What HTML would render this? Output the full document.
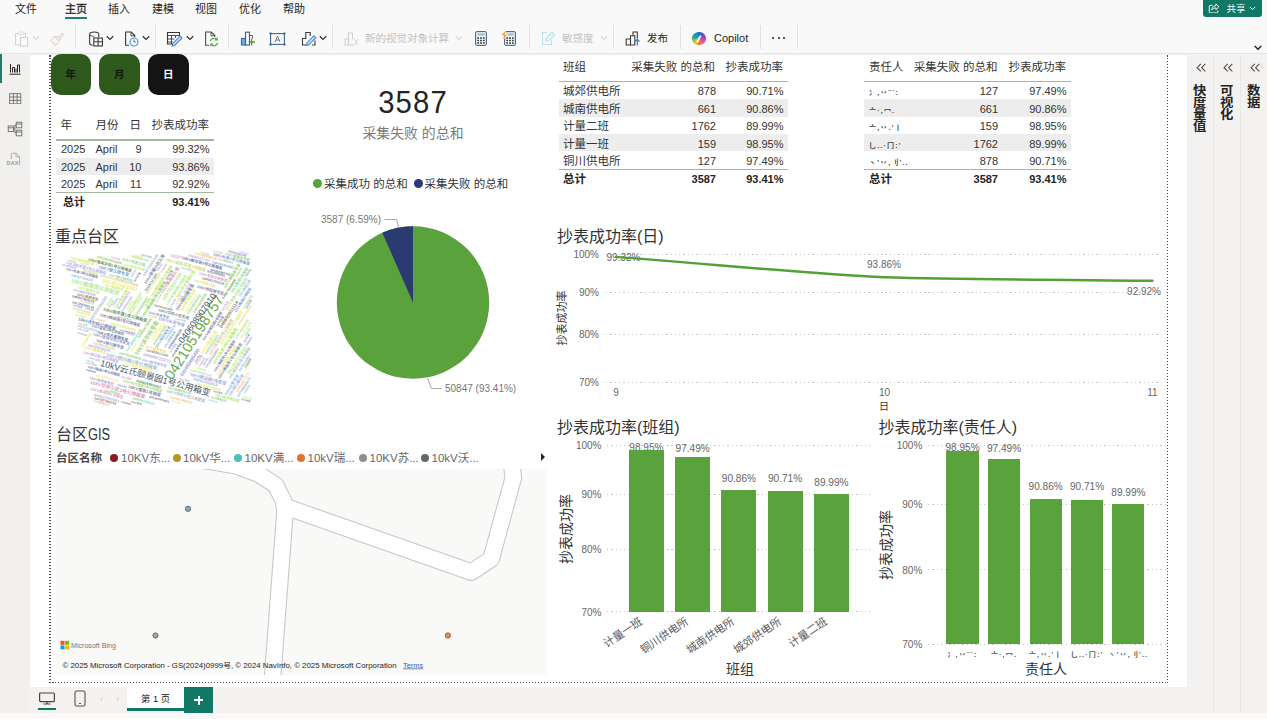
<!DOCTYPE html><html lang="zh-CN"><head><meta charset="utf-8"><title>Power BI</title><style>
*{box-sizing:border-box;margin:0;padding:0}
html,body{width:1267px;height:719px;overflow:hidden;background:#fff}
body{font-family:"Liberation Sans","Noto Sans CJK SC",sans-serif;color:#252423;position:relative}
.abs{position:absolute}
#top{left:0;top:0;width:1267px;height:54px;background:#f9f9f9;border-bottom:1px solid #e6e6e6;box-shadow:0 1px 2px rgba(0,0,0,.08)}
.menu{position:absolute;top:1px;height:16px;line-height:16px;font-size:11px;color:#252423;white-space:nowrap}
.sep{position:absolute;top:25px;width:1px;height:24px;background:#e1e1e1}
#leftnav{left:0;top:55px;width:30px;height:658px;background:#f1f0ef}
#rightp{left:1187px;top:55px;width:80px;height:658px;background:#f3f2f1}
#bottom{left:30px;top:687px;width:1157px;height:26px;background:#f3f2f1}
#foot{left:0;top:713px;width:1267px;height:6px;background:#faf9f8}
.t{position:absolute;white-space:nowrap}
.r{text-align:right}
.tbl{position:absolute;font-size:11px;color:#333}
.tbl .t{height:17.4px;line-height:17.4px}
.hl{position:absolute;height:1.4px;background:#a3b89a}
.alt{position:absolute;background:#ededed;height:17.4px}
.ttl{position:absolute;white-space:nowrap;font-size:16px;color:#333;line-height:20px}
.ax{position:absolute;white-space:nowrap;font-size:10px;color:#666;line-height:12px}
.dl{position:absolute;white-space:nowrap;font-size:10px;color:#666;line-height:12px;text-align:center}
.grid{position:absolute;height:1px;background:repeating-linear-gradient(to right,#c6c6c6 0 1.3px,transparent 1.3px 4.3px)}
.bar{position:absolute;background:#5aa23c}
.vt{position:absolute;writing-mode:vertical-rl;text-orientation:upright;font-weight:bold;font-size:12px;line-height:14px;color:#252423;letter-spacing:0}
</style></head><body>
<div id="top" class="abs">
<div class="menu" style="left:15px">文件</div>
<div class="menu" style="left:65px;-webkit-text-stroke:.3px #252423">主页</div>
<div class="menu" style="left:108px">插入</div>
<div class="menu" style="left:152px">建模</div>
<div class="menu" style="left:195px">视图</div>
<div class="menu" style="left:239px">优化</div>
<div class="menu" style="left:283px">帮助</div>
<div class="abs" style="left:65px;top:17px;width:22px;height:2px;background:#1d7e6c"></div>
<div class="abs" style="left:1203px;top:-3px;width:58.500px;height:20px;background:#117865;border-radius:3px"></div>
<svg class="abs" style="left:1208px;top:2.500px" width="12.500" height="10.700" viewBox="0.500 0 12.500 11.300" fill="none" stroke="#fff" stroke-width="1"><path d="M5 2.5H2.5a1 1 0 0 0-1 1v6a1 1 0 0 0 1 1h7a1 1 0 0 0 1-1V8"/><path d="M8.5 1l3.2 3-3.2 3V5.3c-2.2 0-3.5.8-4.3 2.2.2-2.6 1.6-4.4 4.3-4.6z"/></svg>
<div class="t" style="left:1226.500px;top:1px;font-size:9.500px;line-height:15px;color:#fff">共享</div>
<svg class="abs" style="left:1248.500px;top:5.500px" width="7" height="5" viewBox="0 0 8 6" fill="none" stroke="#fff" stroke-width="1.1"><path d="M.7 1l3.3 3.4L7.3 1"/></svg>
<svg class="abs" style="left:1254px;top:45px" width="8" height="6" viewBox="0 0 8 6" fill="none" stroke="#222" stroke-width="1.4"><path d="M.7 1l3.3 3.3L7.3 1"/></svg>
<div class="sep" style="left:75px"></div>
<div class="sep" style="left:155px"></div>
<div class="sep" style="left:228px"></div>
<div class="sep" style="left:332px"></div>
<div class="sep" style="left:529px"></div>
<div class="sep" style="left:613px"></div>
<div class="sep" style="left:680px"></div>
<div class="sep" style="left:760px"></div>
<div class="sep" style="left:797px"></div>
<svg class="abs" style="left:14px;top:31px" width="15" height="16" viewBox="0 0 15 16" fill="none" stroke="#d4d2d0" stroke-width="1"><path d="M5 2.5H1.5v11.5H6"/><path d="M9 2.5h2.5V6"/><rect x="4.5" y="1" width="5" height="2.5" rx=".8" stroke="#e3d9cf"/><rect x="6.5" y="6.5" width="7" height="8.5" fill="#fbfbfb" stroke="#cfcfcf"/></svg>
<svg class="abs" style="left:32px;top:35px" width="8" height="6" viewBox="0 0 8 6" fill="none" stroke="#d8d8d8" stroke-width="1.1"><path d="M.8 1.2l3.2 3.2 3.2-3.2"/></svg>
<svg class="abs" style="left:49px;top:32px" width="16" height="15" viewBox="0 0 16 15" fill="none" stroke="#ead9c9" stroke-width="1.1"><path d="M13.5 1.2l1.3 1.3-4 4-1.3-1.3z"/><path d="M8.8 4.6l2.6 2.6-1.6 1.6-4.3-4.3z" stroke="#d9d9d9"/><path d="M5.2 4.8L1.3 8.6l5 5 3.8-3.9" /><path d="M3.5 8.5l2.8 2.8" stroke="#eee3d8"/></svg>
<svg class="abs" style="left:88px;top:31px" width="16" height="16" viewBox="0 0 16 16" fill="none" stroke="#3b3a39" stroke-width="1.1"><path d="M1.6 3.2c0-1.3 2-2.2 4.6-2.2s4.6.9 4.6 2.2V6"/><path d="M1.6 3.2v9c0 1 1.300 1.800 3.200 2.100"/><path d="M1.600 3.200c0 1.200 2 2.100 4.600 2.100" stroke-width=".9"/><rect x="5.800" y="7" width="8.600" height="8" fill="#f9f9f9"/><path d="M5.800 10.800h8.600M10.100 7v8"/></svg>
<svg class="abs" style="left:106px;top:35px" width="8" height="6" viewBox="0 0 8 6" fill="none" stroke="#333" stroke-width="1.3"><path d="M.8 1.2l3.2 3.2 3.2-3.2"/></svg>
<svg class="abs" style="left:124px;top:31px" width="16" height="16" viewBox="0 0 16 16" fill="none" stroke="#3b3a39" stroke-width="1.1"><path d="M5 14.200H1.600V1h5.600l3.600 3.600V6"/><path d="M7 1.200v3.600h3.600" stroke-width=".9"/><circle cx="10" cy="11" r="4" stroke="#4a8fd0" fill="#f4f9fd"/><path d="M10 8.600V11h2" stroke="#4a8fd0"/></svg>
<svg class="abs" style="left:142px;top:35px" width="8" height="6" viewBox="0 0 8 6" fill="none" stroke="#333" stroke-width="1.3"><path d="M.8 1.2l3.2 3.2 3.2-3.2"/></svg>
<svg class="abs" style="left:166px;top:31px" width="17" height="16" viewBox="0 0 17 16" fill="none" stroke="#3b3a39" stroke-width="1.1"><path d="M7 13H1.500V1.500h12V5"/><path d="M1.500 4.500h12M1.500 8h7M1.500 11h5M5.500 4.500V13M9.500 4.500V7" stroke-width=".9"/><path d="M14.200 5.200l1.800 1.800-7.200 7.200-2.600.8.800-2.600z" stroke="#3a8ad6" fill="#d6e9fa"/></svg>
<svg class="abs" style="left:186px;top:35px" width="8" height="6" viewBox="0 0 8 6" fill="none" stroke="#333" stroke-width="1.3"><path d="M.8 1.2l3.2 3.2 3.2-3.2"/></svg>
<svg class="abs" style="left:204px;top:31px" width="16" height="16" viewBox="0 0 16 16" fill="none" stroke="#4a4948" stroke-width="1.100"><path d="M5 14.200H1.600V1h5.600l3.600 3.600V6"/><path d="M7 1.200v3.600h3.600" stroke-width=".9"/><path d="M6.400 10.200a3.600 3.600 0 0 1 6.400-1.500M13.600 11.800a3.600 3.600 0 0 1-6.400 1.500" stroke="#4f9a48" stroke-width="1.200"/><path d="M13.200 6.600v2.300h-2.300M6.800 15.300V13h2.300" stroke="#4f9a48" stroke-width="1.100"/></svg>
<svg class="abs" style="left:240px;top:31px" width="16" height="16" viewBox="0 0 16 16" fill="none" stroke="#2a6db0" stroke-width="1.100"><rect x="1.500" y="7.500" width="4" height="6.500" fill="#69b1e8"/><rect x="5.500" y="1.200" width="4" height="12.800" fill="#fafafa" stroke="#3b5f8a"/><path d="M11.600 7.500v7M8.600 11h6.400" stroke="#4f9a48" stroke-width="1.300"/><path d="M9.500 4.500h3v3" stroke="#555" stroke-width=".9"/></svg>
<svg class="abs" style="left:269px;top:32px" width="17" height="14" viewBox="0 0 17 14" fill="none" stroke="#35689c" stroke-width="1.100"><rect x="1.600" y="1.600" width="13.800" height="10.800"/><rect x=".5" y=".5" width="2" height="2" fill="#35689c" stroke="none"/><rect x="14.500" y=".5" width="2" height="2" fill="#35689c" stroke="none"/><rect x=".5" y="11.500" width="2" height="2" fill="#35689c" stroke="none"/><rect x="14.500" y="11.500" width="2" height="2" fill="#35689c" stroke="none"/><path d="M6 10l2.500-6 2.500 6M6.900 8h3.200" stroke="#666" stroke-width=".9"/></svg>
<svg class="abs" style="left:301px;top:31px" width="16" height="16" viewBox="0 0 16 16" fill="none" stroke="#3b3a39" stroke-width="1.100"><path d="M5 14H1.500V7.500h3.300V1.500h4.400V5"/><path d="M12 6v0" /><path d="M13 4.800l1.900 1.900-6.900 6.900-2.700.8.800-2.700z" stroke="#3a8ad6" fill="#cfe5f9"/><path d="M11 14h3V9.500" /></svg>
<svg class="abs" style="left:319px;top:35px" width="8" height="6" viewBox="0 0 8 6" fill="none" stroke="#333" stroke-width="1.3"><path d="M.8 1.2l3.2 3.2 3.2-3.2"/></svg>
<svg class="abs" style="left:344px;top:32px" width="16" height="14" viewBox="0 0 16 14" fill="none" stroke="#cfcfcf" stroke-width="1.100"><path d="M1.200 13V7h3.300v6M4.500 13V1h4v6"/><path d="M.5 13h9" /><path d="M9.500 6.500l4.500 6.500M14 6.500l-3.500 6.500" stroke="#d9d9d9"/></svg>
<div class="t" style="left:365px;top:30px;font-size:10.500px;line-height:16px;color:#c3c3c3">新的视觉对象计算</div>
<svg class="abs" style="left:455px;top:35px" width="8" height="6" viewBox="0 0 8 6" fill="none" stroke="#d8d8d8" stroke-width="1.1"><path d="M.8 1.2l3.2 3.2 3.2-3.2"/></svg>
<svg class="abs" style="left:475px;top:31px" width="12" height="15" viewBox="0 0 12 15" fill="none" stroke="#2f4a6b" stroke-width="1"><rect x=".7" y=".7" width="10.600" height="13.600" rx=".8" fill="#fff"/><rect x="2.300" y="2.300" width="7.400" height="2.400" fill="#8ec1ea" stroke="none"/><rect x="2.3" y="6.2" width="1.800" height="1.600" fill="#3b3a39" stroke="none"/><rect x="5.1" y="6.2" width="1.800" height="1.600" fill="#3b3a39" stroke="none"/><rect x="7.9" y="6.2" width="1.800" height="1.600" fill="#3b3a39" stroke="none"/><rect x="2.3" y="8.7" width="1.800" height="1.600" fill="#3b3a39" stroke="none"/><rect x="5.1" y="8.7" width="1.800" height="1.600" fill="#3b3a39" stroke="none"/><rect x="7.9" y="8.7" width="1.800" height="1.600" fill="#3b3a39" stroke="none"/><rect x="2.3" y="11.2" width="1.800" height="1.600" fill="#3b3a39" stroke="none"/><rect x="5.1" y="11.2" width="1.800" height="1.600" fill="#3b3a39" stroke="none"/><rect x="7.9" y="11.2" width="1.800" height="1.600" fill="#3b3a39" stroke="none"/></svg>
<svg class="abs" style="left:504px;top:31px" width="12" height="15" viewBox="0 0 12 15" fill="none" stroke="#2f4a6b" stroke-width="1"><rect x=".7" y=".7" width="10.600" height="13.600" rx=".8" fill="#fff"/><rect x="2.300" y="2.300" width="7.400" height="2.400" fill="#8ec1ea" stroke="none"/><rect x="2.3" y="6.2" width="1.800" height="1.600" fill="#3b3a39" stroke="none"/><rect x="5.1" y="6.2" width="1.800" height="1.600" fill="#3b3a39" stroke="none"/><rect x="7.9" y="6.2" width="1.800" height="1.600" fill="#3b3a39" stroke="none"/><rect x="2.3" y="8.7" width="1.800" height="1.600" fill="#3b3a39" stroke="none"/><rect x="5.1" y="8.7" width="1.800" height="1.600" fill="#3b3a39" stroke="none"/><rect x="7.9" y="8.7" width="1.800" height="1.600" fill="#3b3a39" stroke="none"/><rect x="2.3" y="11.2" width="1.800" height="1.600" fill="#3b3a39" stroke="none"/><rect x="5.1" y="11.2" width="1.800" height="1.600" fill="#3b3a39" stroke="none"/><rect x="7.9" y="11.2" width="1.800" height="1.600" fill="#3b3a39" stroke="none"/></svg>
<svg class="abs" style="left:500px;top:30px" width="9" height="11" viewBox="0 0 9 11"><path d="M5.500 0L1 5.500h2.600L2.200 10.500 8 4.300H5z" fill="#f59a23" stroke="#f9f9f9" stroke-width=".8"/></svg>
<svg class="abs" style="left:541px;top:31px" width="15" height="15" viewBox="0 0 15 15" fill="none" stroke="#bcdff0" stroke-width="1.100"><path d="M6 1.500H1.500V13.500h9V9"/><path d="M11 1l2.800 2.800-6 6-3 .4.400-3z" fill="#eaf5fb"/></svg>
<div class="t" style="left:562px;top:30px;font-size:10.500px;line-height:16px;color:#c3c3c3">敏感度</div>
<svg class="abs" style="left:600px;top:35px" width="8" height="6" viewBox="0 0 8 6" fill="none" stroke="#d8d8d8" stroke-width="1.1"><path d="M.8 1.2l3.2 3.2 3.2-3.2"/></svg>
<svg class="abs" style="left:625px;top:31px" width="16" height="15" viewBox="0 0 16 15" fill="none" stroke="#3b3a39" stroke-width="1.100"><path d="M1.200 14V8h4.300v6z"/><path d="M5.500 8V4.800h4.300V14H5.500"/><path d="M8 4.800V1h4.300v6.500"/><path d="M12.300 14.500V8.500M10 10.600l2.300-2.300 2.300 2.300" stroke="#2f7fd1" stroke-width="1.200"/></svg>
<div class="t" style="left:647px;top:30px;font-size:10.500px;line-height:16px;color:#252423">发布</div>
<div class="abs" style="left:692px;top:32px;width:14px;height:13px;border-radius:46% 50% 46% 50%;transform:rotate(-8deg);background:conic-gradient(from 0deg,#1678b8 0deg,#6a48c8 55deg,#c040b8 100deg,#f0607a 150deg,#f07a28 190deg,#f4c430 225deg,#7cc850 258deg,#2aa890 290deg,#1e90d8 330deg,#1678b8 360deg)"></div>
<div class="abs" style="left:698.300px;top:34.800px;width:2px;height:7.500px;border-radius:1px;transform:rotate(30deg);background:rgba(255,255,255,.92)"></div>
<div class="t" style="left:714px;top:30px;font-size:11px;line-height:16px;color:#252423">Copilot</div>
<div class="abs" style="left:772.0px;top:37px;width:2px;height:2px;border-radius:1px;background:#222"></div>
<div class="abs" style="left:777.5px;top:37px;width:2px;height:2px;border-radius:1px;background:#222"></div>
<div class="abs" style="left:783.0px;top:37px;width:2px;height:2px;border-radius:1px;background:#222"></div>
</div>
<div id="leftnav" class="abs"></div>
<div class="abs" style="left:0;top:54px;width:1.700px;height:29px;background:#1d7e6c"></div>
<svg class="abs" style="left:9px;top:63px" width="12" height="12" viewBox="0 0 12 12" fill="none" stroke="#252423" stroke-width="1"><path d="M.5 11.200h11"/><path d="M1.500 9.500V1M3.500 9.500v-5h2v5M7 9.500v-4M8.500 9.500V2h2v7.500"/></svg>
<svg class="abs" style="left:9px;top:92.500px" width="12.500" height="11.500" viewBox="0 0 13 12" fill="none" stroke="#6e6d6c" stroke-width=".95"><rect x=".7" y=".7" width="11.600" height="10.600"/><path d="M.7 4.200h11.600M.7 7.700h11.600M4.600 .7v10.600M8.500 .7v10.600"/></svg>
<svg class="abs" style="left:7px;top:121px" width="16" height="16" viewBox="0 0 16 16" fill="none" stroke="#6e6d6c" stroke-width=".9"><rect x="1.200" y="5" width="5.300" height="5.500"/><path d="M1.200 6.800h5.300"/><rect x="9.200" y="1.200" width="5.600" height="5.600"/><path d="M9.200 3h5.600"/><rect x="9.200" y="9.200" width="5.600" height="5.600"/><path d="M9.200 11h5.600"/><path d="M6.500 7.700h1.400V4h1.300M7.900 7.700V12h1.300"/></svg>
<svg class="abs" style="left:7px;top:152px" width="15" height="14" viewBox="0 0 15 14" fill="none" stroke="#a6a4a2" stroke-width=".9"><path d="M4.200 8V2.200C4.200 1.600 4.700 1.200 5.300 1.200H9l3.600 3.600v7.500c0 .6-.5 1-1 1H11.500"/><path d="M9 1.300v3.500h3.500" stroke-width=".8"/></svg>
<div class="t" style="left:6.500px;top:158.500px;font-size:5.500px;line-height:8px;font-weight:bold;color:#9a9896;letter-spacing:.2px;background:#f1f0ef;padding-right:.5px">DAX</div>
<div id="rightp" class="abs"></div>
<svg class="abs" style="left:1195.6px;top:63.300px" width="10.500" height="9.300" viewBox="0 0 12 10" fill="none" stroke="#4a4a4a" stroke-width="1.200"><path d="M5.500 .7L1.200 5l4.300 4.300M10.700 .7L6.400 5l4.300 4.300"/></svg>
<div class="vt" style="left:1191px;top:83.500px;transform:scaleX(1.12)">快度量值</div>
<div class="abs" style="left:1213px;top:55px;width:1px;height:658px;background:#e9e8e7"></div>
<svg class="abs" style="left:1222.6px;top:63.300px" width="10.500" height="9.300" viewBox="0 0 12 10" fill="none" stroke="#4a4a4a" stroke-width="1.200"><path d="M5.500 .7L1.200 5l4.300 4.300M10.700 .7L6.400 5l4.300 4.300"/></svg>
<div class="vt" style="left:1218px;top:83.500px;transform:scaleX(1.12)">可视化</div>
<div class="abs" style="left:1240px;top:55px;width:1px;height:658px;background:#e9e8e7"></div>
<svg class="abs" style="left:1249.6px;top:63.300px" width="10.500" height="9.300" viewBox="0 0 12 10" fill="none" stroke="#4a4a4a" stroke-width="1.200"><path d="M5.500 .7L1.200 5l4.300 4.300M10.700 .7L6.400 5l4.300 4.300"/></svg>
<div class="vt" style="left:1245px;top:83.500px;transform:scaleX(1.12)">数据</div>
<div id="bottom" class="abs"></div><div id="foot" class="abs"></div>
<div class="abs" style="left:127px;top:687px;width:57px;height:24px;background:#fff;border-bottom:3px solid #117865"></div>
<div class="t" style="left:127px;top:692px;width:57px;text-align:center;font-size:9.300px;line-height:14px;color:#252423">第 1 页</div>
<div class="abs" style="left:184px;top:687px;width:29px;height:26px;background:#117865"></div>
<div class="abs" style="left:194px;top:699px;width:9px;height:2px;background:#fff"></div><div class="abs" style="left:197.5px;top:695.5px;width:2px;height:9px;background:#fff"></div>
<svg class="abs" style="left:38px;top:692px" width="18" height="13" viewBox="0 0 18 13" fill="none" stroke="#444" stroke-width="1.2"><rect x="1.6" y="1" width="14.8" height="8.6" rx="1"/><path d="M9 9.6v2M5.5 12h7"/></svg>
<div class="abs" style="left:38px;top:708px;width:18px;height:2px;background:#117865"></div>
<svg class="abs" style="left:74px;top:690px" width="12" height="17" viewBox="0 0 12 17" fill="none" stroke="#555" stroke-width="1.1"><rect x="1" y="1" width="10" height="15" rx="1.5"/><path d="M5 13.5h2"/></svg>
<div class="t" style="left:100px;top:693px;font-size:9px;line-height:12px;color:#c8c6c4">‹</div><div class="t" style="left:116px;top:693px;font-size:9px;line-height:12px;color:#c8c6c4">›</div>
<div class="abs" style="left:49px;top:55px;width:1.500px;height:628px;background:repeating-linear-gradient(to bottom,#484848 0 1.5px,transparent 1.5px 3px)"></div>
<div class="abs" style="left:1166.800px;top:55px;width:1.500px;height:628px;background:repeating-linear-gradient(to bottom,#484848 0 1.5px,transparent 1.5px 3px)"></div>
<div class="abs" style="left:49px;top:681.500px;width:1119px;height:1.500px;background:repeating-linear-gradient(to right,#484848 0 1.5px,transparent 1.5px 3px)"></div>
<div class="abs" style="left:50.5px;top:53.5px;width:40.500px;height:41px;border-radius:10px;background:#2d5a1c;color:#0c1a07;font-weight:bold;font-size:10.500px;line-height:41px;text-align:center">年</div>
<div class="abs" style="left:99px;top:53.5px;width:40.500px;height:41px;border-radius:10px;background:#2d5a1c;color:#0c1a07;font-weight:bold;font-size:10.500px;line-height:41px;text-align:center">月</div>
<div class="abs" style="left:148px;top:53.5px;width:40.500px;height:41px;border-radius:10px;background:#141414;color:#fff;font-weight:bold;font-size:10.500px;line-height:41px;text-align:center">日</div>
<div class="tbl" style="left:0;top:0">
<div class="t" style="left:60.5px;top:117.4px;font-size:11.500px;">年</div>
<div class="t" style="left:95.5px;top:117.4px;font-size:11.500px;">月份</div>
<div class="t r" style="left:-9px;width:150px;top:117.4px;font-size:11.500px;">日</div>
<div class="t r" style="left:59px;width:150px;top:117.4px;font-size:11.500px;">抄表成功率</div>
<div class="hl" style="left:56px;width:158px;top:139.3px"></div>
<div class="t" style="left:61px;top:141.4px;">2025</div>
<div class="t" style="left:95.5px;top:141.4px;">April</div>
<div class="t r" style="left:-8.5px;width:150px;top:141.4px;">9</div>
<div class="t r" style="left:59.5px;width:150px;top:141.4px;">99.32%</div>
<div class="alt" style="left:56px;width:158px;top:157.7px"></div>
<div class="t" style="left:61px;top:158.8px;">2025</div>
<div class="t" style="left:95.5px;top:158.8px;">April</div>
<div class="t r" style="left:-8.5px;width:150px;top:158.8px;">10</div>
<div class="t r" style="left:59.5px;width:150px;top:158.8px;">93.86%</div>
<div class="t" style="left:61px;top:176.2px;">2025</div>
<div class="t" style="left:95.5px;top:176.2px;">April</div>
<div class="t r" style="left:-8.5px;width:150px;top:176.2px;">11</div>
<div class="t r" style="left:59.5px;width:150px;top:176.2px;">92.92%</div>
<div class="hl" style="left:56px;width:158px;top:192.1px"></div>
<div class="t" style="left:61px;top:194.4px;font-weight:bold;color:#252423;"><span style="margin-left:2px">总计</span></div>
<div class="t" style="left:95.5px;top:194.4px;font-weight:bold;color:#252423;"></div>
<div class="t r" style="left:-8.5px;width:150px;top:194.4px;font-weight:bold;color:#252423;"></div>
<div class="t r" style="left:59.5px;width:150px;top:194.4px;font-weight:bold;color:#252423;">93.41%</div>
</div>
<div class="tbl" style="left:0;top:0">
<div class="t" style="left:563px;top:59.3px;font-size:11.500px;">班组</div>
<div class="t r" style="left:565px;width:150px;top:59.3px;font-size:11.500px;">采集失败 的总和</div>
<div class="t r" style="left:633px;width:150px;top:59.3px;font-size:11.500px;">抄表成功率</div>
<div class="hl" style="left:559px;width:229px;top:80.9px"></div>
<div class="t" style="left:563px;top:83.3px;font-size:11.500px;">城郊供电所</div>
<div class="t r" style="left:566px;width:150px;top:83.3px;">878</div>
<div class="t r" style="left:633.5px;width:150px;top:83.3px;">90.71%</div>
<div class="alt" style="left:559px;width:229px;top:99.3px"></div>
<div class="t" style="left:563px;top:100.7px;font-size:11.500px;">城南供电所</div>
<div class="t r" style="left:566px;width:150px;top:100.7px;">661</div>
<div class="t r" style="left:633.5px;width:150px;top:100.7px;">90.86%</div>
<div class="t" style="left:563px;top:118.1px;font-size:11.500px;">计量二班</div>
<div class="t r" style="left:566px;width:150px;top:118.1px;">1762</div>
<div class="t r" style="left:633.5px;width:150px;top:118.1px;">89.99%</div>
<div class="alt" style="left:559px;width:229px;top:134.1px"></div>
<div class="t" style="left:563px;top:135.5px;font-size:11.500px;">计量一班</div>
<div class="t r" style="left:566px;width:150px;top:135.5px;">159</div>
<div class="t r" style="left:633.5px;width:150px;top:135.5px;">98.95%</div>
<div class="t" style="left:563px;top:152.9px;font-size:11.500px;">铜川供电所</div>
<div class="t r" style="left:566px;width:150px;top:152.9px;">127</div>
<div class="t r" style="left:633.5px;width:150px;top:152.9px;">97.49%</div>
<div class="hl" style="left:559px;width:229px;top:168.5px"></div>
<div class="t" style="left:563px;top:171.1px;font-weight:bold;color:#252423;font-size:11.500px;">总计</div>
<div class="t r" style="left:566px;width:150px;top:171.1px;font-weight:bold;color:#252423;">3587</div>
<div class="t r" style="left:633.5px;width:150px;top:171.1px;font-weight:bold;color:#252423;">93.41%</div>
</div>
<div class="tbl" style="left:0;top:0">
<div class="t" style="left:869px;top:59.3px;font-size:11.500px;">责任人</div>
<div class="t r" style="left:847.5px;width:150px;top:59.3px;font-size:11.500px;">采集失败 的总和</div>
<div class="t r" style="left:916px;width:150px;top:59.3px;font-size:11.500px;">抄表成功率</div>
<div class="hl" style="left:864px;width:207px;top:80.9px"></div>
<div class="t" style="left:869px;top:83.3px;"><span style="color:#444;font-size:7px;letter-spacing:1.200px;font-weight:bold">冫,丷¨´:</span></div>
<div class="t r" style="left:848px;width:150px;top:83.3px;">127</div>
<div class="t r" style="left:916.5px;width:150px;top:83.3px;">97.49%</div>
<div class="alt" style="left:864px;width:207px;top:99.3px"></div>
<div class="t" style="left:869px;top:100.7px;"><span style="color:#444;font-size:7px;letter-spacing:1.200px;font-weight:bold">亠·,冖.</span></div>
<div class="t r" style="left:848px;width:150px;top:100.7px;">661</div>
<div class="t r" style="left:916.5px;width:150px;top:100.7px;">90.86%</div>
<div class="t" style="left:869px;top:118.1px;"><span style="color:#444;font-size:7px;letter-spacing:1.200px;font-weight:bold">亠,丷.'丨</span></div>
<div class="t r" style="left:848px;width:150px;top:118.1px;">159</div>
<div class="t r" style="left:916.5px;width:150px;top:118.1px;">98.95%</div>
<div class="alt" style="left:864px;width:207px;top:134.1px"></div>
<div class="t" style="left:869px;top:135.5px;"><span style="color:#444;font-size:7px;letter-spacing:1.200px;font-weight:bold">乚..·冂:'</span></div>
<div class="t r" style="left:848px;width:150px;top:135.5px;">1762</div>
<div class="t r" style="left:916.5px;width:150px;top:135.5px;">89.99%</div>
<div class="t" style="left:869px;top:152.9px;"><span style="color:#444;font-size:7px;letter-spacing:1.200px;font-weight:bold">丶'丷,刂'..</span></div>
<div class="t r" style="left:848px;width:150px;top:152.9px;">878</div>
<div class="t r" style="left:916.5px;width:150px;top:152.9px;">90.71%</div>
<div class="hl" style="left:864px;width:207px;top:168.5px"></div>
<div class="t" style="left:869px;top:171.1px;font-weight:bold;color:#252423;font-size:11.500px;">总计</div>
<div class="t r" style="left:848px;width:150px;top:171.1px;font-weight:bold;color:#252423;">3587</div>
<div class="t r" style="left:916.5px;width:150px;top:171.1px;font-weight:bold;color:#252423;">93.41%</div>
</div>
<div class="t" style="left:313px;width:200px;top:83.500px;text-align:center;font-size:31.500px;line-height:36px;color:#252423;letter-spacing:1.200px;transform:scaleX(.93)">3587</div>
<div class="t" style="left:313px;width:200px;top:124px;text-align:center;font-size:13.900px;line-height:18px;color:#7a7a7a">采集失败 的总和</div>
<div class="abs" style="left:313px;top:178.600px;width:9.200px;height:9.200px;border-radius:5px;background:#5aa23c"></div>
<div class="t" style="left:324px;top:175.500px;font-size:11.500px;line-height:16px;color:#333">采集成功 的总和</div>
<div class="abs" style="left:413.600px;top:178.600px;width:9.200px;height:9.200px;border-radius:5px;background:#2b3a72"></div>
<div class="t" style="left:424.500px;top:175.500px;font-size:11.500px;line-height:16px;color:#333">采集失败 的总和</div>
<svg class="abs" style="left:300px;top:200px" width="260" height="210" viewBox="300 200 260 210"><circle cx="413" cy="302.5" r="76.2" fill="#5aa23c"/><path d="M413 302.5L382.34 232.74A76.2 76.2 0 0 1 413 226.3Z" fill="#2b3a72"/><path d="M384.500 219.500H396.500L398.500 227" fill="none" stroke="#aaa" stroke-width="1"/><path d="M427.500 378L431.500 388.500H442" fill="none" stroke="#aaa" stroke-width="1"/></svg>
<div class="ax" style="left:321px;top:213.500px;font-size:10px;color:#777">3587 (6.59%)</div>
<div class="ax" style="left:445px;top:382.500px;font-size:10px;color:#777">50847 (93.41%)</div>
<div class="ttl" style="left:557px;top:226.700px">抄表成功率(日)</div>
<div class="ax r" style="left:549px;width:50px;top:248.6px">100%</div>
<div class="grid" style="left:605.500px;width:555.500px;top:253.7px"></div>
<div class="ax r" style="left:549px;width:50px;top:287.2px">90%</div>
<div class="grid" style="left:605.500px;width:555.500px;top:292.3px"></div>
<div class="ax r" style="left:549px;width:50px;top:328.7px">80%</div>
<div class="grid" style="left:605.500px;width:555.500px;top:333.8px"></div>
<div class="ax r" style="left:549px;width:50px;top:376.7px">70%</div>
<div class="grid" style="left:605.500px;width:555.500px;top:381.8px"></div>
<div class="ax" style="left:531.700px;width:60px;top:311.500px;text-align:center;transform:rotate(-90deg);color:#333;font-size:11px">抄表成功率</div>
<div class="ax" style="left:596px;width:40px;top:387px;text-align:center">9</div>
<div class="ax" style="left:864.5px;width:40px;top:387px;text-align:center">10</div>
<div class="ax" style="left:1132.5px;width:40px;top:387px;text-align:center">11</div>
<div class="ax" style="left:864px;width:40px;top:401px;text-align:center;color:#333">日</div>
<div class="dl" style="left:603.500px;width:40px;top:252.300px">99.32%</div>
<div class="dl" style="left:864px;width:40px;top:259px">93.86%</div>
<div class="dl r" style="left:1111px;width:50px;top:286px;text-align:right">92.92%</div>
<svg class="abs" style="left:600px;top:245px" width="570" height="50" viewBox="600 245 570 50"><path d="M616 256.9C705 263.4 804.5 273.6 884.5 277.2C964.5 279.6 1062.5 279.9 1152.5 280.8" fill="none" stroke="#53a038" stroke-width="2.400" stroke-linecap="round"/></svg>
<div class="ttl" style="left:557px;top:417.500px">抄表成功率(班组)</div>
<div class="ax r" style="left:551.5px;width:50px;top:439.8px">100%</div>
<div class="grid" style="left:607px;width:263px;top:444.5px"></div>
<div class="ax r" style="left:551.5px;width:50px;top:489.3px">90%</div>
<div class="grid" style="left:607px;width:263px;top:494.0px"></div>
<div class="ax r" style="left:551.5px;width:50px;top:543.8px">80%</div>
<div class="grid" style="left:607px;width:263px;top:548.5px"></div>
<div class="ax r" style="left:551.5px;width:50px;top:606.5px">70%</div>
<div class="grid" style="left:607px;width:263px;top:611.2px"></div>
<div class="dl" style="left:621.4px;width:50px;top:442.4px;font-size:10.100px">98.95%</div>
<div class="dl" style="left:667.7px;width:50px;top:443.4px;font-size:10.100px">97.49%</div>
<div class="dl" style="left:713.9px;width:50px;top:473.4px;font-size:10.100px">90.86%</div>
<div class="dl" style="left:760.1px;width:50px;top:473.4px;font-size:10.100px">90.71%</div>
<div class="dl" style="left:806.4px;width:50px;top:477.4px;font-size:10.100px">89.99%</div>
<div class="bar" style="left:628.8px;width:35.2px;top:449.9px;height:161.8px"></div>
<div class="bar" style="left:675.1px;width:35.2px;top:456.9px;height:154.8px"></div>
<div class="bar" style="left:721.3px;width:35.2px;top:489.8px;height:121.9px"></div>
<div class="bar" style="left:767.5px;width:35.2px;top:490.6px;height:121.1px"></div>
<div class="bar" style="left:813.8px;width:35.2px;top:494.3px;height:117.4px"></div>
<div class="t" style="left:515.5px;width:100px;top:520px;text-align:center;transform:rotate(-90deg);color:#333;font-size:14px;line-height:18px">抄表成功率</div>
<div class="t" style="left:690px;width:100px;top:660px;text-align:center;color:#333;font-size:14px;line-height:18px">班组</div>
<div class="ax" style="left:540.9px;width:100px;top:613.500px;text-align:right;transform-origin:100% 50%;transform:rotate(-34deg);font-size:11px;color:#5a5a5a">计量一班</div>
<div class="ax" style="left:587.2px;width:100px;top:613.500px;text-align:right;transform-origin:100% 50%;transform:rotate(-34deg);font-size:11px;color:#5a5a5a">铜川供电所</div>
<div class="ax" style="left:633.4px;width:100px;top:613.500px;text-align:right;transform-origin:100% 50%;transform:rotate(-34deg);font-size:11px;color:#5a5a5a">城南供电所</div>
<div class="ax" style="left:679.6px;width:100px;top:613.500px;text-align:right;transform-origin:100% 50%;transform:rotate(-34deg);font-size:11px;color:#5a5a5a">城郊供电所</div>
<div class="ax" style="left:725.9px;width:100px;top:613.500px;text-align:right;transform-origin:100% 50%;transform:rotate(-34deg);font-size:11px;color:#5a5a5a">计量二班</div>
<div class="ttl" style="left:878.5px;top:417.500px">抄表成功率(责任人)</div>
<div class="ax r" style="left:872.3px;width:50px;top:439.8px">100%</div>
<div class="grid" style="left:928px;width:238px;top:444.5px"></div>
<div class="ax r" style="left:872.3px;width:50px;top:499.0px">90%</div>
<div class="grid" style="left:928px;width:238px;top:503.7px"></div>
<div class="ax r" style="left:872.3px;width:50px;top:564.5px">80%</div>
<div class="grid" style="left:928px;width:238px;top:569.2px"></div>
<div class="ax r" style="left:872.3px;width:50px;top:639.2px">70%</div>
<div class="grid" style="left:928px;width:238px;top:643.9px"></div>
<div class="dl" style="left:937.5px;width:50px;top:442.4px;font-size:10.100px">98.95%</div>
<div class="dl" style="left:979.1px;width:50px;top:443.4px;font-size:10.100px">97.49%</div>
<div class="dl" style="left:1020.7px;width:50px;top:481.1px;font-size:10.100px">90.86%</div>
<div class="dl" style="left:1062.1px;width:50px;top:481.1px;font-size:10.100px">90.71%</div>
<div class="dl" style="left:1103.4px;width:50px;top:486.9px;font-size:10.100px">89.99%</div>
<div class="bar" style="left:946.4px;width:32.2px;top:450.9px;height:193.5px"></div>
<div class="bar" style="left:988.0px;width:32.2px;top:459.2px;height:185.2px"></div>
<div class="bar" style="left:1029.6px;width:32.2px;top:498.6px;height:145.8px"></div>
<div class="bar" style="left:1071.0px;width:32.2px;top:499.5px;height:144.9px"></div>
<div class="bar" style="left:1112.3px;width:32.2px;top:504.0px;height:140.4px"></div>
<div class="t" style="left:835.5px;width:100px;top:535.5px;text-align:center;transform:rotate(-90deg);color:#333;font-size:14px;line-height:18px">抄表成功率</div>
<div class="t" style="left:996px;width:100px;top:660px;text-align:center;color:#333;font-size:14px;line-height:18px">责任人</div>
<div class="ax" style="left:932.5px;width:60px;top:649px;text-align:center;font-size:7px;letter-spacing:1.200px;color:#555;font-weight:bold">冫,丷¨´:</div>
<div class="ax" style="left:974px;width:60px;top:649px;text-align:center;font-size:7px;letter-spacing:1.200px;color:#555;font-weight:bold">亠·,冖.</div>
<div class="ax" style="left:1015.7px;width:60px;top:649px;text-align:center;font-size:7px;letter-spacing:1.200px;color:#555;font-weight:bold">亠,丷.'丨</div>
<div class="ax" style="left:1057px;width:60px;top:649px;text-align:center;font-size:7px;letter-spacing:1.200px;color:#555;font-weight:bold">乚..·冂:'</div>
<div class="ax" style="left:1098.4px;width:60px;top:649px;text-align:center;font-size:7px;letter-spacing:1.200px;color:#555;font-weight:bold">丶'丷,刂'..</div>
<div class="ttl" style="left:55px;top:226.500px">重点台区</div>
<div class="ttl" style="left:56px;top:425px">台区<span style="display:inline-block;transform:scaleX(.8);transform-origin:0 50%;margin-right:-6px">GIS</span></div>
<div class="t" style="left:56px;top:450px;font-size:11.500px;line-height:16px;font-weight:bold;color:#484848">台区名称</div>
<div class="abs" style="left:110px;top:454px;width:8.400px;height:8.400px;border-radius:5px;background:#8b1a24"></div>
<div class="t" style="left:121px;top:450px;font-size:11.500px;line-height:16px;color:#666">10KV东...</div>
<div class="abs" style="left:172.5px;top:454px;width:8.400px;height:8.400px;border-radius:5px;background:#b5982a"></div>
<div class="t" style="left:183px;top:450px;font-size:11.500px;line-height:16px;color:#666">10kV华...</div>
<div class="abs" style="left:234px;top:454px;width:8.400px;height:8.400px;border-radius:5px;background:#4cc1b5"></div>
<div class="t" style="left:244.5px;top:450px;font-size:11.500px;line-height:16px;color:#666">10KV满...</div>
<div class="abs" style="left:296.5px;top:454px;width:8.400px;height:8.400px;border-radius:5px;background:#e2742a"></div>
<div class="t" style="left:307.5px;top:450px;font-size:11.500px;line-height:16px;color:#666">10kV瑞...</div>
<div class="abs" style="left:358.5px;top:454px;width:8.400px;height:8.400px;border-radius:5px;background:#8a9090"></div>
<div class="t" style="left:369.5px;top:450px;font-size:11.500px;line-height:16px;color:#666">10KV苏...</div>
<div class="abs" style="left:421px;top:454px;width:8.400px;height:8.400px;border-radius:5px;background:#5f6b6b"></div>
<div class="t" style="left:431.5px;top:450px;font-size:11.500px;line-height:16px;color:#666">10kV沃...</div>
<div class="abs" style="left:541px;top:452.500px;width:0;height:0;border-left:4.500px solid #252423;border-top:4px solid transparent;border-bottom:4px solid transparent"></div>
<svg class="abs" style="left:55.5px;top:469px" width="491.5" height="206" viewBox="55.5 469 491.5 206"><rect x="55.5" y="469" width="491.5" height="206" fill="#f9f9f8"/>
<path d="M271.900 680L284.500 511.500L283.100 501L275 485.100L258 474.100L236.100 465.900L209.400 461.300L180 457" fill="none" stroke="#c6c6c6" stroke-width="17.600" stroke-linejoin="round"/>
<path d="M284.500 511.500L287.700 507.600L470.800 572.100L490.600 559.100L512.800 477.800L511 462" fill="none" stroke="#c6c6c6" stroke-width="17.600" stroke-linejoin="round"/>
<path d="M271.900 680L284.500 511.500L283.100 501L275 485.100L258 474.100L236.100 465.900L209.400 461.300L180 457" fill="none" stroke="#fff" stroke-width="15.500" stroke-linejoin="round"/>
<path d="M284.500 511.500L287.700 507.600L470.800 572.100L490.600 559.100L512.800 477.800L511 462" fill="none" stroke="#fff" stroke-width="15.500" stroke-linejoin="round"/>
<circle cx="187.5" cy="508.8" r="2.600" fill="#8fa9bd" stroke="#5c7388" stroke-width="1"/>
<circle cx="155" cy="635.5" r="2.600" fill="#a3a3a3" stroke="#6e6e6e" stroke-width="1"/>
<circle cx="447.4" cy="635.5" r="2.600" fill="#dc9364" stroke="#a3562b" stroke-width="1"/>
<rect x="60" y="640.8" width="4" height="4" fill="#f25022"/>
<rect x="64.6" y="640.8" width="4" height="4" fill="#7fba00"/>
<rect x="60" y="645.4" width="4" height="4" fill="#00a4ef"/>
<rect x="64.6" y="645.4" width="4" height="4" fill="#ffb900"/>
<text x="70.500" y="647.500" font-family="Liberation Sans, sans-serif" font-size="7.100" fill="#767676">Microsoft Bing</text>
<text x="62" y="668.200" font-family="Liberation Sans, Noto Sans CJK SC, sans-serif" font-size="7.400" fill="#222" textLength="334" lengthAdjust="spacingAndGlyphs">© 2025 Microsoft Corporation - GS(2024)0999号, © 2024 NavInfo, © 2025 Microsoft Corporation</text>
<text x="402.500" y="667.500" font-family="Liberation Sans, sans-serif" font-size="7.400" fill="#3a5fa8" text-decoration="underline">Terms</text>
</svg>
<div class="abs" style="left:56px;top:248px;width:200px;height:162px;overflow:hidden;font-family:'Liberation Sans','Noto Sans CJK SC',sans-serif">
<span class="t" style="left:39.8px;top:125.2px;width:118.9px;text-align:center;font-size:8.9px;line-height:10.7px;color:#4a5468;transform:rotate(15.4deg)">10kV云氏颐景园1号公用箱变</span>
<span class="t" style="left:88.0px;top:81.3px;width:101.1px;text-align:center;font-size:14.5px;line-height:17.4px;color:#66a846;transform:rotate(-57.4deg)">042105198757</span>
<span class="t" style="left:110.4px;top:65.1px;width:63.1px;text-align:center;font-size:8.8px;line-height:10.6px;color:#3f4d6a;transform:rotate(-54.5deg)">040608907910</span>
<span class="t" style="left:2.9px;top:76.6px;width:175.5px;text-align:center;font-size:21.6px;line-height:25.9px;color:#98d070;font-weight:bold;transform:rotate(-57deg) scale(0.25)">10kV沃尔玛专变</span>
<span class="t" style="left:-70.1px;top:25.8px;width:218.7px;text-align:center;font-size:21.6px;line-height:25.9px;color:#b4e898;font-weight:bold;transform:rotate(15deg) scale(0.25)">10kV紫薇苑公用配变</span>
<span class="t" style="left:-17.1px;top:23.8px;width:161.7px;text-align:center;font-size:21.6px;line-height:25.9px;color:#e4f07c;font-weight:bold;transform:rotate(15deg) scale(0.25)">041461003307</span>
<span class="t" style="left:-37.1px;top:101.9px;width:225.4px;text-align:center;font-size:19.2px;line-height:23.0px;color:#a8bccc;font-weight:bold;transform:rotate(15deg) scale(0.25)">10KV铜川路2号公用箱变</span>
<span class="t" style="left:-61.1px;top:130.1px;width:245.5px;text-align:center;font-size:19.2px;line-height:23.0px;color:#d89cbc;font-weight:bold;transform:rotate(15deg) scale(0.25)">10kV华府小区3号公用箱变</span>
<span class="t" style="left:43.4px;top:27.4px;width:145.7px;text-align:center;font-size:19.2px;line-height:23.0px;color:#b4e898;font-weight:bold;transform:rotate(-57deg) scale(0.25)">049792622439</span>
<span class="t" style="left:107.6px;top:100.6px;width:145.7px;text-align:center;font-size:19.2px;line-height:23.0px;color:#c0f070;font-weight:bold;transform:rotate(-57deg) scale(0.25)">041452117850</span>
<span class="t" style="left:99.9px;top:55.2px;width:145.7px;text-align:center;font-size:19.2px;line-height:23.0px;color:#948460;font-weight:bold;transform:rotate(-57deg) scale(0.25)">046690911114</span>
<span class="t" style="left:60.9px;top:103.1px;width:145.7px;text-align:center;font-size:19.2px;line-height:23.0px;color:#989cd4;font-weight:bold;transform:rotate(-57deg) scale(0.25)">040490495490</span>
<span class="t" style="left:-45.9px;top:65.9px;width:174.0px;text-align:center;font-size:16.8px;line-height:20.2px;color:#7484b8;font-weight:bold;transform:rotate(15deg) scale(0.25)">10kV沃尔玛公用配变</span>
<span class="t" style="left:-31.0px;top:57.3px;width:200.2px;text-align:center;font-size:16.8px;line-height:20.2px;color:#6a8c58;font-weight:bold;transform:rotate(15deg) scale(0.25)">10kV和平里1号公用箱变</span>
<span class="t" style="left:44.1px;top:22.1px;width:140.4px;text-align:center;font-size:16.8px;line-height:20.2px;color:#d89cbc;font-weight:bold;transform:rotate(-57deg) scale(0.25)">10kV紫薇苑公变</span>
<span class="t" style="left:77.5px;top:87.8px;width:182.6px;text-align:center;font-size:16.8px;line-height:20.2px;color:#b0e860;font-weight:bold;transform:rotate(-57deg) scale(0.25)">10KV永安3号公用箱变</span>
<span class="t" style="left:35.7px;top:99.6px;width:129.7px;text-align:center;font-size:16.8px;line-height:20.2px;color:#c4a8ea;font-weight:bold;transform:rotate(15deg) scale(0.25)">048989723213</span>
<span class="t" style="left:-21.7px;top:49.6px;width:129.7px;text-align:center;font-size:16.8px;line-height:20.2px;color:#a8bccc;font-weight:bold;transform:rotate(-57deg) scale(0.25)">047556392180</span>
<span class="t" style="left:92.0px;top:83.6px;width:122.9px;text-align:center;font-size:16.8px;line-height:20.2px;color:#f4ec78;font-weight:bold;transform:rotate(-57deg) scale(0.25)">10KV南湖公变</span>
<span class="t" style="left:20.3px;top:11.3px;width:157.2px;text-align:center;font-size:16.8px;line-height:20.2px;color:#7890a4;font-weight:bold;transform:rotate(-57deg) scale(0.25)">10kV幸福小区公变</span>
<span class="t" style="left:54.3px;top:63.8px;width:122.9px;text-align:center;font-size:16.8px;line-height:20.2px;color:#a8a8dc;font-weight:bold;transform:rotate(15deg) scale(0.25)">10KV长安专变</span>
<span class="t" style="left:-12.4px;top:12.8px;width:139.7px;text-align:center;font-size:16.8px;line-height:20.2px;color:#80a0cc;font-weight:bold;transform:rotate(15deg) scale(0.25)">10KV望江楼专变</span>
<span class="t" style="left:14.1px;top:133.0px;width:149.0px;text-align:center;font-size:16.8px;line-height:20.2px;color:#8880a4;font-weight:bold;transform:rotate(15deg) scale(0.25)">10KV富民1号箱变</span>
<span class="t" style="left:69.4px;top:121.3px;width:165.8px;text-align:center;font-size:16.8px;line-height:20.2px;color:#a8a8dc;font-weight:bold;transform:rotate(15deg) scale(0.25)">10KV建设路2号配变</span>
<span class="t" style="left:37.9px;top:6.9px;width:183.4px;text-align:center;font-size:16.8px;line-height:20.2px;color:#cce080;font-weight:bold;transform:rotate(15deg) scale(0.25)">10kV城南花苑1号箱变</span>
<span class="t" style="left:59.2px;top:38.9px;width:140.4px;text-align:center;font-size:16.8px;line-height:20.2px;color:#8880a4;font-weight:bold;transform:rotate(-57deg) scale(0.25)">10kV铜川路专变</span>
<span class="t" style="left:-14.9px;top:78.6px;width:143.3px;text-align:center;font-size:15.2px;line-height:18.2px;color:#6c7698;font-weight:bold;transform:rotate(15deg) scale(0.25)">10KV东方家园专变</span>
<span class="t" style="left:38.4px;top:26.3px;width:119.0px;text-align:center;font-size:15.2px;line-height:18.2px;color:#d8ec60;font-weight:bold;transform:rotate(-57deg) scale(0.25)">040972529097</span>
<span class="t" style="left:-27.5px;top:63.2px;width:182.1px;text-align:center;font-size:15.2px;line-height:18.2px;color:#8880a4;font-weight:bold;transform:rotate(15deg) scale(0.25)">10KV锦绣园3号公用箱变</span>
<span class="t" style="left:114.8px;top:23.2px;width:137.2px;text-align:center;font-size:15.2px;line-height:18.2px;color:#88dca0;font-weight:bold;transform:rotate(-57deg) scale(0.25)">10kV南湖2号配变</span>
<span class="t" style="left:92.2px;top:2.4px;width:166.9px;text-align:center;font-size:15.2px;line-height:18.2px;color:#80a0cc;font-weight:bold;transform:rotate(15deg) scale(0.25)">10KV长安3号公用箱变</span>
<span class="t" style="left:-45.2px;top:7.5px;width:198.0px;text-align:center;font-size:15.2px;line-height:18.2px;color:#6a8c58;font-weight:bold;transform:rotate(15deg) scale(0.25)">10kV金域华府3号公用箱变</span>
<span class="t" style="left:-28.5px;top:81.9px;width:166.9px;text-align:center;font-size:15.2px;line-height:18.2px;color:#989cd4;font-weight:bold;transform:rotate(15deg) scale(0.25)">10KV金域华府2号配变</span>
<span class="t" style="left:-24.8px;top:136.4px;width:151.7px;text-align:center;font-size:15.2px;line-height:18.2px;color:#ecaac0;font-weight:bold;transform:rotate(15deg) scale(0.25)">10KV紫薇苑1号箱变</span>
<span class="t" style="left:119.2px;top:127.9px;width:113.5px;text-align:center;font-size:15.2px;line-height:18.2px;color:#88bce4;font-weight:bold;transform:rotate(-57deg) scale(0.25)">10kV长安专变</span>
<span class="t" style="left:32.5px;top:127.0px;width:119.0px;text-align:center;font-size:15.2px;line-height:18.2px;color:#6a8c58;font-weight:bold;transform:rotate(15deg) scale(0.25)">049826991603</span>
<span class="t" style="left:-9.6px;top:86.8px;width:128.1px;text-align:center;font-size:15.2px;line-height:18.2px;color:#7484b8;font-weight:bold;transform:rotate(15deg) scale(0.25)">10KV铜川路专变</span>
<span class="t" style="left:-6.0px;top:3.0px;width:119.0px;text-align:center;font-size:15.2px;line-height:18.2px;color:#98d070;font-weight:bold;transform:rotate(15deg) scale(0.25)">046282918289</span>
<span class="t" style="left:89.6px;top:32.5px;width:128.7px;text-align:center;font-size:15.2px;line-height:18.2px;color:#8880a4;font-weight:bold;transform:rotate(15deg) scale(0.25)">10kV世纪城专变</span>
<span class="t" style="left:97.2px;top:37.4px;width:166.9px;text-align:center;font-size:15.2px;line-height:18.2px;color:#b4e898;font-weight:bold;transform:rotate(-57deg) scale(0.25)">10KV瑞景花园1号箱变</span>
<span class="t" style="left:58.4px;top:27.0px;width:143.3px;text-align:center;font-size:15.2px;line-height:18.2px;color:#b0e860;font-weight:bold;transform:rotate(-57deg) scale(0.25)">10KV东方家园公变</span>
<span class="t" style="left:6.6px;top:41.9px;width:182.1px;text-align:center;font-size:15.2px;line-height:18.2px;color:#88cc60;font-weight:bold;transform:rotate(-57deg) scale(0.25)">10KV建设路2号公用箱变</span>
<span class="t" style="left:8.3px;top:69.5px;width:119.0px;text-align:center;font-size:15.2px;line-height:18.2px;color:#d8ec60;font-weight:bold;transform:rotate(15deg) scale(0.25)">044213079005</span>
<span class="t" style="left:20.6px;top:4.8px;width:113.5px;text-align:center;font-size:15.2px;line-height:18.2px;color:#88dca0;font-weight:bold;transform:rotate(15deg) scale(0.25)">10kV东风公变</span>
<span class="t" style="left:112.1px;top:19.2px;width:128.1px;text-align:center;font-size:15.2px;line-height:18.2px;color:#98d070;font-weight:bold;transform:rotate(-57deg) scale(0.25)">10KV满庭芳专变</span>
<span class="t" style="left:83.3px;top:103.8px;width:182.1px;text-align:center;font-size:15.2px;line-height:18.2px;color:#7890a4;font-weight:bold;transform:rotate(-57deg) scale(0.25)">10KV满庭芳1号公用箱变</span>
<span class="t" style="left:35.3px;top:8.3px;width:119.0px;text-align:center;font-size:15.2px;line-height:18.2px;color:#a8bccc;font-weight:bold;transform:rotate(-57deg) scale(0.25)">044722500346</span>
<span class="t" style="left:84.2px;top:70.8px;width:182.8px;text-align:center;font-size:15.2px;line-height:18.2px;color:#e4f07c;font-weight:bold;transform:rotate(-57deg) scale(0.25)">10kV滨河湾3号公用箱变</span>
<span class="t" style="left:43.3px;top:139.2px;width:173.7px;text-align:center;font-size:15.2px;line-height:18.2px;color:#a8bccc;font-weight:bold;transform:rotate(15deg) scale(0.25)">10KV华府小区公用配变</span>
<span class="t" style="left:46.2px;top:57.1px;width:143.3px;text-align:center;font-size:15.2px;line-height:18.2px;color:#7890a4;font-weight:bold;transform:rotate(15deg) scale(0.25)">10KV华府小区专变</span>
<span class="t" style="left:74.2px;top:79.5px;width:182.1px;text-align:center;font-size:15.2px;line-height:18.2px;color:#e0c498;font-weight:bold;transform:rotate(-57deg) scale(0.25)">10KV滨河湾3号公用箱变</span>
<span class="t" style="left:-9.4px;top:140.6px;width:119.0px;text-align:center;font-size:15.2px;line-height:18.2px;color:#9cacea;font-weight:bold;transform:rotate(15deg) scale(0.25)">043537037653</span>
<span class="t" style="left:-60.8px;top:10.8px;width:182.1px;text-align:center;font-size:15.2px;line-height:18.2px;color:#c4a8ea;font-weight:bold;transform:rotate(15deg) scale(0.25)">10KV和平里3号公用箱变</span>
<span class="t" style="left:95.2px;top:102.5px;width:151.7px;text-align:center;font-size:15.2px;line-height:18.2px;color:#f4ec78;font-weight:bold;transform:rotate(-57deg) scale(0.25)">10KV建设路1号箱变</span>
<span class="t" style="left:54.8px;top:6.4px;width:182.1px;text-align:center;font-size:15.2px;line-height:18.2px;color:#6c7698;font-weight:bold;transform:rotate(15deg) scale(0.25)">10KV新华街3号公用箱变</span>
<span class="t" style="left:89.5px;top:125.4px;width:119.0px;text-align:center;font-size:15.2px;line-height:18.2px;color:#88bce4;font-weight:bold;transform:rotate(15deg) scale(0.25)">042023322015</span>
<span class="t" style="left:-18.8px;top:34.4px;width:102.8px;text-align:center;font-size:13.6px;line-height:16.3px;color:#c0f070;font-weight:bold;transform:rotate(15deg) scale(0.25)">10KV富民公变</span>
<span class="t" style="left:47.8px;top:93.2px;width:102.8px;text-align:center;font-size:13.6px;line-height:16.3px;color:#f0dc70;font-weight:bold;transform:rotate(15deg) scale(0.25)">10KV富民专变</span>
<span class="t" style="left:49.5px;top:79.0px;width:108.3px;text-align:center;font-size:13.6px;line-height:16.3px;color:#98d070;font-weight:bold;transform:rotate(-57deg) scale(0.25)">044335874833</span>
<span class="t" style="left:81.4px;top:69.9px;width:151.2px;text-align:center;font-size:13.6px;line-height:16.3px;color:#8880a4;font-weight:bold;transform:rotate(-57deg) scale(0.25)">10KV龙湖花园2号配变</span>
<span class="t" style="left:-28.0px;top:115.3px;width:151.8px;text-align:center;font-size:13.6px;line-height:16.3px;color:#7484b8;font-weight:bold;transform:rotate(15deg) scale(0.25)">10kV南湖1号公用箱变</span>
<span class="t" style="left:85.7px;top:100.4px;width:165.4px;text-align:center;font-size:13.6px;line-height:16.3px;color:#7484b8;font-weight:bold;transform:rotate(-57deg) scale(0.25)">10kV满庭芳1号公用箱变</span>
<span class="t" style="left:89.4px;top:1.7px;width:108.3px;text-align:center;font-size:13.6px;line-height:16.3px;color:#c4a8ea;font-weight:bold;transform:rotate(15deg) scale(0.25)">049301211300</span>
<span class="t" style="left:-10.7px;top:92.1px;width:108.3px;text-align:center;font-size:13.6px;line-height:16.3px;color:#9cacea;font-weight:bold;transform:rotate(15deg) scale(0.25)">041479026055</span>
<span class="t" style="left:91.5px;top:20.6px;width:130.0px;text-align:center;font-size:13.6px;line-height:16.3px;color:#d89cbc;font-weight:bold;transform:rotate(15deg) scale(0.25)">10KV东风公用配变</span>
<span class="t" style="left:131.8px;top:72.9px;width:108.3px;text-align:center;font-size:13.6px;line-height:16.3px;color:#b4e898;font-weight:bold;transform:rotate(-57deg) scale(0.25)">049198659535</span>
<span class="t" style="left:13.8px;top:43.0px;width:102.8px;text-align:center;font-size:13.6px;line-height:16.3px;color:#b0e860;font-weight:bold;transform:rotate(-57deg) scale(0.25)">10KV长安公变</span>
<span class="t" style="left:39.5px;top:106.7px;width:116.4px;text-align:center;font-size:13.6px;line-height:16.3px;color:#9cacea;font-weight:bold;transform:rotate(15deg) scale(0.25)">10KV新华街公变</span>
<span class="t" style="left:-12.9px;top:124.8px;width:117.0px;text-align:center;font-size:13.6px;line-height:16.3px;color:#a8a8dc;font-weight:bold;transform:rotate(15deg) scale(0.25)">10kV新华街专变</span>
<span class="t" style="left:-3.2px;top:121.6px;width:108.3px;text-align:center;font-size:13.6px;line-height:16.3px;color:#f4ec78;font-weight:bold;transform:rotate(15deg) scale(0.25)">041690654100</span>
<span class="t" style="left:-24.5px;top:74.3px;width:151.8px;text-align:center;font-size:13.6px;line-height:16.3px;color:#7890a4;font-weight:bold;transform:rotate(15deg) scale(0.25)">10kV富民3号公用箱变</span>
<span class="t" style="left:100.9px;top:107.1px;width:165.4px;text-align:center;font-size:13.6px;line-height:16.3px;color:#a8bccc;font-weight:bold;transform:rotate(-57deg) scale(0.25)">10kV新华街1号公用箱变</span>
<span class="t" style="left:24.9px;top:45.7px;width:108.3px;text-align:center;font-size:13.6px;line-height:16.3px;color:#b0e860;font-weight:bold;transform:rotate(-57deg) scale(0.25)">041069837104</span>
<span class="t" style="left:35.2px;top:72.4px;width:108.3px;text-align:center;font-size:13.6px;line-height:16.3px;color:#88cc60;font-weight:bold;transform:rotate(-57deg) scale(0.25)">044953778089</span>
<span class="t" style="left:102.2px;top:102.0px;width:108.3px;text-align:center;font-size:13.6px;line-height:16.3px;color:#989cd4;font-weight:bold;transform:rotate(-57deg) scale(0.25)">041193422954</span>
<span class="t" style="left:133.9px;top:130.8px;width:108.3px;text-align:center;font-size:13.6px;line-height:16.3px;color:#9cacea;font-weight:bold;transform:rotate(-57deg) scale(0.25)">047499585073</span>
<span class="t" style="left:-19.6px;top:40.7px;width:102.8px;text-align:center;font-size:13.6px;line-height:16.3px;color:#948460;font-weight:bold;transform:rotate(15deg) scale(0.25)">10KV西苑专变</span>
<span class="t" style="left:-50.3px;top:16.7px;width:151.8px;text-align:center;font-size:13.6px;line-height:16.3px;color:#8880a4;font-weight:bold;transform:rotate(15deg) scale(0.25)">10kV长安3号公用箱变</span>
<span class="t" style="left:32.2px;top:49.9px;width:108.3px;text-align:center;font-size:13.6px;line-height:16.3px;color:#98d070;font-weight:bold;transform:rotate(-57deg) scale(0.25)">041066982927</span>
<span class="t" style="left:5.7px;top:21.5px;width:117.0px;text-align:center;font-size:13.6px;line-height:16.3px;color:#88dca0;font-weight:bold;transform:rotate(15deg) scale(0.25)">10kV望江楼专变</span>
<span class="t" style="left:-26.7px;top:43.1px;width:108.3px;text-align:center;font-size:13.6px;line-height:16.3px;color:#6c7698;font-weight:bold;transform:rotate(15deg) scale(0.25)">046837983674</span>
<span class="t" style="left:133.2px;top:125.9px;width:108.3px;text-align:center;font-size:13.6px;line-height:16.3px;color:#f6c480;font-weight:bold;transform:rotate(-57deg) scale(0.25)">044618677277</span>
<span class="t" style="left:96.8px;top:26.7px;width:102.8px;text-align:center;font-size:13.6px;line-height:16.3px;color:#f0dc70;font-weight:bold;transform:rotate(15deg) scale(0.25)">10KV永安公变</span>
<span class="t" style="left:-32.2px;top:4.8px;width:117.0px;text-align:center;font-size:13.6px;line-height:16.3px;color:#d8ec60;font-weight:bold;transform:rotate(15deg) scale(0.25)">10kV新华街公变</span>
<span class="t" style="left:-27.2px;top:48.9px;width:108.3px;text-align:center;font-size:13.6px;line-height:16.3px;color:#7484b8;font-weight:bold;transform:rotate(15deg) scale(0.25)">041258599144</span>
<span class="t" style="left:122.0px;top:128.8px;width:117.0px;text-align:center;font-size:13.6px;line-height:16.3px;color:#a8a8dc;font-weight:bold;transform:rotate(-57deg) scale(0.25)">10kV铜川路公变</span>
<span class="t" style="left:90.9px;top:116.7px;width:108.3px;text-align:center;font-size:13.6px;line-height:16.3px;color:#b4e898;font-weight:bold;transform:rotate(15deg) scale(0.25)">046708627340</span>
<span class="t" style="left:83.9px;top:48.2px;width:108.3px;text-align:center;font-size:13.6px;line-height:16.3px;color:#88dca0;font-weight:bold;transform:rotate(-57deg) scale(0.25)">046498090922</span>
<span class="t" style="left:113.4px;top:142.2px;width:116.4px;text-align:center;font-size:13.6px;line-height:16.3px;color:#b0e860;font-weight:bold;transform:rotate(15deg) scale(0.25)">10KV新华街公变</span>
<span class="t" style="left:46.9px;top:97.0px;width:108.3px;text-align:center;font-size:13.6px;line-height:16.3px;color:#948460;font-weight:bold;transform:rotate(15deg) scale(0.25)">047665611346</span>
<span class="t" style="left:50.9px;top:58.5px;width:103.4px;text-align:center;font-size:13.6px;line-height:16.3px;color:#80a0cc;font-weight:bold;transform:rotate(15deg) scale(0.25)">10kV永安专变</span>
<span class="t" style="left:119.2px;top:32.6px;width:108.3px;text-align:center;font-size:13.6px;line-height:16.3px;color:#6a8c58;font-weight:bold;transform:rotate(-57deg) scale(0.25)">049273462909</span>
<span class="t" style="left:12.5px;top:111.4px;width:138.2px;text-align:center;font-size:13.6px;line-height:16.3px;color:#f4ec78;font-weight:bold;transform:rotate(15deg) scale(0.25)">10kV新华街2号配变</span>
<span class="t" style="left:41.8px;top:33.7px;width:157.2px;text-align:center;font-size:13.6px;line-height:16.3px;color:#b4e898;font-weight:bold;transform:rotate(-57deg) scale(0.25)">10KV龙湖花园公用配变</span>
<span class="t" style="left:70.5px;top:143.7px;width:108.3px;text-align:center;font-size:13.6px;line-height:16.3px;color:#f6c480;font-weight:bold;transform:rotate(15deg) scale(0.25)">042091486915</span>
<span class="t" style="left:122.7px;top:1.2px;width:117.0px;text-align:center;font-size:13.6px;line-height:16.3px;color:#98d070;font-weight:bold;transform:rotate(15deg) scale(0.25)">10kV苏家庄专变</span>
<span class="t" style="left:-12.5px;top:94.4px;width:102.8px;text-align:center;font-size:13.6px;line-height:16.3px;color:#f0dc70;font-weight:bold;transform:rotate(15deg) scale(0.25)">10KV南湖专变</span>
<span class="t" style="left:-5.9px;top:89.8px;width:108.3px;text-align:center;font-size:13.6px;line-height:16.3px;color:#e0c498;font-weight:bold;transform:rotate(15deg) scale(0.25)">043682452183</span>
<span class="t" style="left:134.7px;top:59.4px;width:108.3px;text-align:center;font-size:13.6px;line-height:16.3px;color:#f0dc70;font-weight:bold;transform:rotate(-57deg) scale(0.25)">049402743434</span>
<span class="t" style="left:19.9px;top:100.0px;width:108.3px;text-align:center;font-size:13.6px;line-height:16.3px;color:#98d070;font-weight:bold;transform:rotate(15deg) scale(0.25)">047785454886</span>
<span class="t" style="left:113.2px;top:8.8px;width:108.3px;text-align:center;font-size:13.6px;line-height:16.3px;color:#989cd4;font-weight:bold;transform:rotate(15deg) scale(0.25)">046424424982</span>
<span class="t" style="left:64.6px;top:83.3px;width:108.3px;text-align:center;font-size:13.6px;line-height:16.3px;color:#6c7698;font-weight:bold;transform:rotate(-57deg) scale(0.25)">040984590629</span>
<span class="t" style="left:-3.4px;top:130.3px;width:179.0px;text-align:center;font-size:13.6px;line-height:16.3px;color:#a8dc70;font-weight:bold;transform:rotate(15deg) scale(0.25)">10kV东方家园3号公用箱变</span>
<span class="t" style="left:-28.0px;top:21.8px;width:108.3px;text-align:center;font-size:13.6px;line-height:16.3px;color:#88bce4;font-weight:bold;transform:rotate(15deg) scale(0.25)">045437354387</span>
<span class="t" style="left:32.8px;top:144.9px;width:108.3px;text-align:center;font-size:13.6px;line-height:16.3px;color:#88dca0;font-weight:bold;transform:rotate(15deg) scale(0.25)">044864138024</span>
<span class="t" style="left:90.2px;top:46.5px;width:108.3px;text-align:center;font-size:13.6px;line-height:16.3px;color:#98d070;font-weight:bold;transform:rotate(-57deg) scale(0.25)">048156258285</span>
<span class="t" style="left:101.9px;top:88.1px;width:108.3px;text-align:center;font-size:13.6px;line-height:16.3px;color:#88dca0;font-weight:bold;transform:rotate(-57deg) scale(0.25)">042842252825</span>
<span class="t" style="left:122.0px;top:43.6px;width:130.0px;text-align:center;font-size:13.6px;line-height:16.3px;color:#80a0cc;font-weight:bold;transform:rotate(-57deg) scale(0.25)">10KV南湖公用配变</span>
<span class="t" style="left:22.5px;top:25.0px;width:165.4px;text-align:center;font-size:13.6px;line-height:16.3px;color:#b0e860;font-weight:bold;transform:rotate(-57deg) scale(0.25)">10kV新华街3号公用箱变</span>
<span class="t" style="left:73.8px;top:43.9px;width:117.0px;text-align:center;font-size:13.6px;line-height:16.3px;color:#d8ec60;font-weight:bold;transform:rotate(-57deg) scale(0.25)">10kV新华街专变</span>
<span class="t" style="left:-5.3px;top:144.8px;width:108.3px;text-align:center;font-size:13.6px;line-height:16.3px;color:#948460;font-weight:bold;transform:rotate(15deg) scale(0.25)">043447468354</span>
<span class="t" style="left:49.4px;top:81.0px;width:116.4px;text-align:center;font-size:13.6px;line-height:16.3px;color:#80a0cc;font-weight:bold;transform:rotate(-57deg) scale(0.25)">10KV世纪城专变</span>
<span class="t" style="left:89.8px;top:130.7px;width:124.6px;text-align:center;font-size:13.6px;line-height:16.3px;color:#f4ec78;font-weight:bold;transform:rotate(15deg) scale(0.25)">10kV西苑2号配变</span>
<span class="t" style="left:-37.6px;top:101.4px;width:165.4px;text-align:center;font-size:13.6px;line-height:16.3px;color:#c4a8ea;font-weight:bold;transform:rotate(15deg) scale(0.25)">10kV望江楼3号公用箱变</span>
<span class="t" style="left:102.6px;top:24.8px;width:108.3px;text-align:center;font-size:13.6px;line-height:16.3px;color:#6c7698;font-weight:bold;transform:rotate(15deg) scale(0.25)">044561703219</span>
<span class="t" style="left:84.8px;top:47.8px;width:100.3px;text-align:center;font-size:12.4px;line-height:14.9px;color:#f4ec78;font-weight:bold;transform:rotate(-57deg) scale(0.25)">046572863746</span>
<span class="t" style="left:139.0px;top:106.6px;width:100.3px;text-align:center;font-size:12.4px;line-height:14.9px;color:#88bce4;font-weight:bold;transform:rotate(-57deg) scale(0.25)">047301180577</span>
<span class="t" style="left:53.2px;top:144.4px;width:100.3px;text-align:center;font-size:12.4px;line-height:14.9px;color:#6c7698;font-weight:bold;transform:rotate(15deg) scale(0.25)">046204970601</span>
<span class="t" style="left:30.4px;top:49.6px;width:100.3px;text-align:center;font-size:12.4px;line-height:14.9px;color:#c0f070;font-weight:bold;transform:rotate(-57deg) scale(0.25)">048055713330</span>
<span class="t" style="left:95.7px;top:0.9px;width:108.3px;text-align:center;font-size:12.4px;line-height:14.9px;color:#f6c480;font-weight:bold;transform:rotate(15deg) scale(0.25)">10kV新华街公变</span>
<span class="t" style="left:65.8px;top:84.4px;width:95.9px;text-align:center;font-size:12.4px;line-height:14.9px;color:#88bce4;font-weight:bold;transform:rotate(-57deg) scale(0.25)">10kV西苑专变</span>
<span class="t" style="left:23.5px;top:11.7px;width:108.3px;text-align:center;font-size:12.4px;line-height:14.9px;color:#c0f070;font-weight:bold;transform:rotate(15deg) scale(0.25)">10kV滨河湾专变</span>
<span class="t" style="left:44.5px;top:27.0px;width:100.3px;text-align:center;font-size:12.4px;line-height:14.9px;color:#7484b8;font-weight:bold;transform:rotate(-57deg) scale(0.25)">041097117680</span>
<span class="t" style="left:114.0px;top:16.6px;width:100.3px;text-align:center;font-size:12.4px;line-height:14.9px;color:#5c6888;font-weight:bold;transform:rotate(15deg) scale(0.25)">044269257742</span>
<span class="t" style="left:9.8px;top:32.0px;width:95.9px;text-align:center;font-size:12.4px;line-height:14.9px;color:#d8ec60;font-weight:bold;transform:rotate(15deg) scale(0.25)">10kV南湖专变</span>
<span class="t" style="left:17.7px;top:85.2px;width:120.1px;text-align:center;font-size:12.4px;line-height:14.9px;color:#90dcc8;font-weight:bold;transform:rotate(-57deg) scale(0.25)">10KV金域华府专变</span>
<span class="t" style="left:17.9px;top:45.4px;width:100.3px;text-align:center;font-size:12.4px;line-height:14.9px;color:#989cd4;font-weight:bold;transform:rotate(-57deg) scale(0.25)">044901195772</span>
<span class="t" style="left:140.5px;top:33.1px;width:95.9px;text-align:center;font-size:12.4px;line-height:14.9px;color:#88bce4;font-weight:bold;transform:rotate(-57deg) scale(0.25)">10kV西苑公变</span>
<span class="t" style="left:-19.1px;top:73.1px;width:100.3px;text-align:center;font-size:12.4px;line-height:14.9px;color:#c4a8ea;font-weight:bold;transform:rotate(15deg) scale(0.25)">042711249638</span>
<span class="t" style="left:141.5px;top:74.9px;width:95.9px;text-align:center;font-size:12.4px;line-height:14.9px;color:#e4f07c;font-weight:bold;transform:rotate(-57deg) scale(0.25)">10kV永安专变</span>
<span class="t" style="left:37.5px;top:4.4px;width:92.3px;text-align:center;font-size:11.2px;line-height:13.4px;color:#a8dc70;font-weight:bold;transform:rotate(15deg) scale(0.25)">049945667553</span>
<span class="t" style="left:68.4px;top:136.4px;width:110.7px;text-align:center;font-size:11.2px;line-height:13.4px;color:#98d070;font-weight:bold;transform:rotate(15deg) scale(0.25)">10kV城南花苑公变</span>
<span class="t" style="left:-19.9px;top:55.8px;width:92.3px;text-align:center;font-size:11.2px;line-height:13.4px;color:#e0c498;font-weight:bold;transform:rotate(15deg) scale(0.25)">047917599462</span>
<span class="t" style="left:134.6px;top:-0.9px;width:92.3px;text-align:center;font-size:11.2px;line-height:13.4px;color:#8880a4;font-weight:bold;transform:rotate(15deg) scale(0.25)">043721342199</span>
<span class="t" style="left:53.2px;top:76.5px;width:99.0px;text-align:center;font-size:11.2px;line-height:13.4px;color:#f4ec78;font-weight:bold;transform:rotate(-57deg) scale(0.25)">10KV沃尔玛专变</span>
<span class="t" style="left:69.7px;top:78.3px;width:88.3px;text-align:center;font-size:11.2px;line-height:13.4px;color:#88bce4;font-weight:bold;transform:rotate(-57deg) scale(0.25)">10kV永安公变</span>
<span class="t" style="left:114.2px;top:19.3px;width:92.3px;text-align:center;font-size:11.2px;line-height:13.4px;color:#6c7698;font-weight:bold;transform:rotate(15deg) scale(0.25)">040329896391</span>
<span class="t" style="left:-26.7px;top:38.0px;width:110.7px;text-align:center;font-size:11.2px;line-height:13.4px;color:#c4a8ea;font-weight:bold;transform:rotate(15deg) scale(0.25)">10kV城南花苑专变</span>
<span class="t" style="left:25.2px;top:49.2px;width:92.3px;text-align:center;font-size:11.2px;line-height:13.4px;color:#c4a8ea;font-weight:bold;transform:rotate(-57deg) scale(0.25)">049258908667</span>
<span class="t" style="left:60.6px;top:53.0px;width:92.3px;text-align:center;font-size:11.2px;line-height:13.4px;color:#6a8c58;font-weight:bold;transform:rotate(15deg) scale(0.25)">042781461389</span>
<span class="t" style="left:-1.9px;top:26.8px;width:138.8px;text-align:center;font-size:11.2px;line-height:13.4px;color:#f6c480;font-weight:bold;transform:rotate(15deg) scale(0.25)">10KV世纪城2号公用箱变</span>
<span class="t" style="left:-11.0px;top:86.1px;width:83.2px;text-align:center;font-size:10.4px;line-height:12.5px;color:#d8ec60;font-weight:bold;transform:rotate(-57deg) scale(0.25)">10kV长安专变</span>
<span class="t" style="left:137.6px;top:52.2px;width:62.4px;text-align:center;font-size:10.4px;line-height:12.5px;color:#d89cbc;font-weight:bold;transform:rotate(-57deg) scale(0.25)">10kV专变</span>
<span class="t" style="left:117.4px;top:108.4px;width:58.1px;text-align:center;font-size:10.4px;line-height:12.5px;color:#a8a8dc;font-weight:bold;transform:rotate(-57deg) scale(0.25)">0406089</span>
<span class="t" style="left:127.6px;top:146.8px;width:58.1px;text-align:center;font-size:10.4px;line-height:12.5px;color:#90dcc8;font-weight:bold;transform:rotate(15deg) scale(0.25)">0421051</span>
<span class="t" style="left:91.4px;top:148.2px;width:58.1px;text-align:center;font-size:10.4px;line-height:12.5px;color:#f4ec78;font-weight:bold;transform:rotate(15deg) scale(0.25)">0421051</span>
<span class="t" style="left:88.2px;top:48.8px;width:58.1px;text-align:center;font-size:10.4px;line-height:12.5px;color:#a8bccc;font-weight:bold;transform:rotate(-57deg) scale(0.25)">0406089</span>
<span class="t" style="left:37.3px;top:132.2px;width:58.1px;text-align:center;font-size:10.4px;line-height:12.5px;color:#7890a4;font-weight:bold;transform:rotate(15deg) scale(0.25)">0421051</span>
<span class="t" style="left:149.5px;top:47.9px;width:83.2px;text-align:center;font-size:10.4px;line-height:12.5px;color:#a8dc70;font-weight:bold;transform:rotate(-57deg) scale(0.25)">10kV富民公变</span>
<span class="t" style="left:69.9px;top:78.0px;width:58.1px;text-align:center;font-size:10.4px;line-height:12.5px;color:#f4ec78;font-weight:bold;transform:rotate(-57deg) scale(0.25)">0406089</span>
<span class="t" style="left:82.0px;top:21.1px;width:62.4px;text-align:center;font-size:10.4px;line-height:12.5px;color:#6c7698;font-weight:bold;transform:rotate(-57deg) scale(0.25)">10kV公变</span>
<span class="t" style="left:133.3px;top:66.6px;width:62.4px;text-align:center;font-size:10.4px;line-height:12.5px;color:#5c6888;font-weight:bold;transform:rotate(-57deg) scale(0.25)">10kV公变</span>
<span class="t" style="left:115.6px;top:115.4px;width:58.1px;text-align:center;font-size:10.4px;line-height:12.5px;color:#c0f070;font-weight:bold;transform:rotate(15deg) scale(0.25)">0406089</span>
<span class="t" style="left:38.8px;top:123.8px;width:62.4px;text-align:center;font-size:10.4px;line-height:12.5px;color:#d89cbc;font-weight:bold;transform:rotate(15deg) scale(0.25)">10kV专变</span>
<span class="t" style="left:161.8px;top:144.2px;width:58.1px;text-align:center;font-size:10.4px;line-height:12.5px;color:#b4e898;font-weight:bold;transform:rotate(15deg) scale(0.25)">0421051</span>
<span class="t" style="left:100.1px;top:33.9px;width:62.4px;text-align:center;font-size:10.4px;line-height:12.5px;color:#c4a8ea;font-weight:bold;transform:rotate(-57deg) scale(0.25)">10kV公变</span>
<span class="t" style="left:79.0px;top:13.5px;width:58.1px;text-align:center;font-size:10.4px;line-height:12.5px;color:#d89cbc;font-weight:bold;transform:rotate(-57deg) scale(0.25)">0406089</span>
<span class="t" style="left:5.8px;top:117.4px;width:58.1px;text-align:center;font-size:10.4px;line-height:12.5px;color:#6c7698;font-weight:bold;transform:rotate(15deg) scale(0.25)">0406089</span>
<span class="t" style="left:48.5px;top:92.9px;width:58.1px;text-align:center;font-size:10.4px;line-height:12.5px;color:#f4ec78;font-weight:bold;transform:rotate(-57deg) scale(0.25)">0421051</span>
<span class="t" style="left:58.7px;top:1.5px;width:62.4px;text-align:center;font-size:10.4px;line-height:12.5px;color:#80a0cc;font-weight:bold;transform:rotate(15deg) scale(0.25)">10kV公变</span>
<span class="t" style="left:7.2px;top:104.5px;width:62.4px;text-align:center;font-size:10.4px;line-height:12.5px;color:#a8a8dc;font-weight:bold;transform:rotate(15deg) scale(0.25)">10kV公变</span>
<span class="t" style="left:78.6px;top:95.7px;width:83.2px;text-align:center;font-size:10.4px;line-height:12.5px;color:#5c6888;font-weight:bold;transform:rotate(-57deg) scale(0.25)">10kV长安专变</span>
<span class="t" style="left:92.7px;top:65.5px;width:62.4px;text-align:center;font-size:10.4px;line-height:12.5px;color:#a8bccc;font-weight:bold;transform:rotate(15deg) scale(0.25)">10kV专变</span>
<span class="t" style="left:3.8px;top:110.3px;width:62.4px;text-align:center;font-size:10.4px;line-height:12.5px;color:#a8bccc;font-weight:bold;transform:rotate(15deg) scale(0.25)">10kV专变</span>
<span class="t" style="left:121.0px;top:144.7px;width:83.2px;text-align:center;font-size:10.4px;line-height:12.5px;color:#88cc60;font-weight:bold;transform:rotate(15deg) scale(0.25)">10kV南湖公变</span>
<span class="t" style="left:163.0px;top:108.6px;width:58.1px;text-align:center;font-size:10.4px;line-height:12.5px;color:#6a8c58;font-weight:bold;transform:rotate(-57deg) scale(0.25)">0406089</span>
<span class="t" style="left:88.8px;top:1.7px;width:62.4px;text-align:center;font-size:10.4px;line-height:12.5px;color:#ecaac0;font-weight:bold;transform:rotate(15deg) scale(0.25)">10kV专变</span>
<span class="t" style="left:-6.9px;top:18.1px;width:83.2px;text-align:center;font-size:10.4px;line-height:12.5px;color:#cce080;font-weight:bold;transform:rotate(15deg) scale(0.25)">10kV南湖公变</span>
<span class="t" style="left:3.6px;top:149.1px;width:83.2px;text-align:center;font-size:10.4px;line-height:12.5px;color:#ecaac0;font-weight:bold;transform:rotate(15deg) scale(0.25)">10kV南湖公变</span>
<span class="t" style="left:161.7px;top:135.1px;width:58.1px;text-align:center;font-size:10.4px;line-height:12.5px;color:#98d070;font-weight:bold;transform:rotate(-57deg) scale(0.25)">0406089</span>
<span class="t" style="left:15.2px;top:66.0px;width:58.1px;text-align:center;font-size:10.4px;line-height:12.5px;color:#f6c480;font-weight:bold;transform:rotate(15deg) scale(0.25)">0406089</span>
<span class="t" style="left:-6.6px;top:61.9px;width:62.4px;text-align:center;font-size:10.4px;line-height:12.5px;color:#d8ec60;font-weight:bold;transform:rotate(15deg) scale(0.25)">10kV专变</span>
<span class="t" style="left:-3.8px;top:76.2px;width:62.4px;text-align:center;font-size:10.4px;line-height:12.5px;color:#88bce4;font-weight:bold;transform:rotate(15deg) scale(0.25)">10kV公变</span>
<span class="t" style="left:99.1px;top:15.2px;width:62.4px;text-align:center;font-size:10.4px;line-height:12.5px;color:#a8bccc;font-weight:bold;transform:rotate(15deg) scale(0.25)">10kV专变</span>
<span class="t" style="left:48.8px;top:148.5px;width:62.4px;text-align:center;font-size:10.4px;line-height:12.5px;color:#948460;font-weight:bold;transform:rotate(15deg) scale(0.25)">10kV专变</span>
<span class="t" style="left:85.8px;top:94.0px;width:62.4px;text-align:center;font-size:10.4px;line-height:12.5px;color:#9cacea;font-weight:bold;transform:rotate(-57deg) scale(0.25)">10kV专变</span>
<span class="t" style="left:24.9px;top:46.8px;width:58.1px;text-align:center;font-size:10.4px;line-height:12.5px;color:#a8dc70;font-weight:bold;transform:rotate(-57deg) scale(0.25)">0421051</span>
<span class="t" style="left:128.0px;top:7.1px;width:83.2px;text-align:center;font-size:10.4px;line-height:12.5px;color:#88dca0;font-weight:bold;transform:rotate(15deg) scale(0.25)">10kV西苑专变</span>
<span class="t" style="left:111.9px;top:106.0px;width:62.4px;text-align:center;font-size:10.4px;line-height:12.5px;color:#d89cbc;font-weight:bold;transform:rotate(-57deg) scale(0.25)">10kV公变</span>
<span class="t" style="left:153.5px;top:18.2px;width:58.1px;text-align:center;font-size:10.4px;line-height:12.5px;color:#98d070;font-weight:bold;transform:rotate(-57deg) scale(0.25)">0406089</span>
<span class="t" style="left:49.8px;top:22.6px;width:62.4px;text-align:center;font-size:10.4px;line-height:12.5px;color:#6c7698;font-weight:bold;transform:rotate(-57deg) scale(0.25)">10kV公变</span>
<span class="t" style="left:40.9px;top:148.8px;width:58.1px;text-align:center;font-size:10.4px;line-height:12.5px;color:#948460;font-weight:bold;transform:rotate(15deg) scale(0.25)">0406089</span>
<span class="t" style="left:96.7px;top:125.9px;width:62.4px;text-align:center;font-size:10.4px;line-height:12.5px;color:#a8bccc;font-weight:bold;transform:rotate(15deg) scale(0.25)">10kV专变</span>
<span class="t" style="left:-2.6px;top:80.1px;width:58.1px;text-align:center;font-size:10.4px;line-height:12.5px;color:#a8a8dc;font-weight:bold;transform:rotate(15deg) scale(0.25)">0406089</span>
<span class="t" style="left:164.0px;top:87.1px;width:58.1px;text-align:center;font-size:10.4px;line-height:12.5px;color:#7484b8;font-weight:bold;transform:rotate(-57deg) scale(0.25)">0421051</span>
<span class="t" style="left:159.0px;top:-1.3px;width:58.1px;text-align:center;font-size:10.4px;line-height:12.5px;color:#c4a8ea;font-weight:bold;transform:rotate(15deg) scale(0.25)">0421051</span>
<span class="t" style="left:15.3px;top:137.8px;width:83.2px;text-align:center;font-size:10.4px;line-height:12.5px;color:#88dca0;font-weight:bold;transform:rotate(15deg) scale(0.25)">10kV西苑专变</span>
<span class="t" style="left:29.7px;top:77.5px;width:83.2px;text-align:center;font-size:10.4px;line-height:12.5px;color:#8880a4;font-weight:bold;transform:rotate(15deg) scale(0.25)">10kV长安专变</span>
<span class="t" style="left:91.9px;top:46.2px;width:62.4px;text-align:center;font-size:10.4px;line-height:12.5px;color:#e0c498;font-weight:bold;transform:rotate(-57deg) scale(0.25)">10kV专变</span>
<span class="t" style="left:6.5px;top:56.4px;width:53.4px;text-align:center;font-size:9.2px;line-height:11.0px;color:#948460;font-weight:bold;transform:rotate(15deg) scale(0.25)">0406089</span>
<span class="t" style="left:7.2px;top:108.0px;width:53.4px;text-align:center;font-size:9.2px;line-height:11.0px;color:#90dcc8;font-weight:bold;transform:rotate(15deg) scale(0.25)">0406089</span>
<span class="t" style="left:1.9px;top:10.9px;width:53.4px;text-align:center;font-size:9.2px;line-height:11.0px;color:#b4e898;font-weight:bold;transform:rotate(15deg) scale(0.25)">0406089</span>
<span class="t" style="left:55.5px;top:2.6px;width:53.4px;text-align:center;font-size:9.2px;line-height:11.0px;color:#f0dc70;font-weight:bold;transform:rotate(15deg) scale(0.25)">0421051</span>
<span class="t" style="left:163.7px;top:51.0px;width:57.3px;text-align:center;font-size:9.2px;line-height:11.0px;color:#7890a4;font-weight:bold;transform:rotate(-57deg) scale(0.25)">10kV公变</span>
<span class="t" style="left:-11.1px;top:7.5px;width:53.4px;text-align:center;font-size:9.2px;line-height:11.0px;color:#a8a8dc;font-weight:bold;transform:rotate(15deg) scale(0.25)">0406089</span>
<span class="t" style="left:31.3px;top:4.8px;width:57.3px;text-align:center;font-size:9.2px;line-height:11.0px;color:#c4a8ea;font-weight:bold;transform:rotate(15deg) scale(0.25)">10kV专变</span>
<span class="t" style="left:33.4px;top:48.3px;width:53.4px;text-align:center;font-size:9.2px;line-height:11.0px;color:#80a0cc;font-weight:bold;transform:rotate(-57deg) scale(0.25)">0421051</span>
<span class="t" style="left:165.0px;top:78.8px;width:53.4px;text-align:center;font-size:9.2px;line-height:11.0px;color:#88dca0;font-weight:bold;transform:rotate(-57deg) scale(0.25)">0406089</span>
<span class="t" style="left:-7.2px;top:49.4px;width:75.7px;text-align:center;font-size:9.2px;line-height:11.0px;color:#f6c480;font-weight:bold;transform:rotate(15deg) scale(0.25)">10kV永安公变</span>
<span class="t" style="left:29.2px;top:50.0px;width:53.4px;text-align:center;font-size:9.2px;line-height:11.0px;color:#88cc60;font-weight:bold;transform:rotate(-57deg) scale(0.25)">0421051</span>
<span class="t" style="left:63.0px;top:49.3px;width:57.3px;text-align:center;font-size:9.2px;line-height:11.0px;color:#a8dc70;font-weight:bold;transform:rotate(-57deg) scale(0.25)">10kV专变</span>
<span class="t" style="left:133.4px;top:-0.7px;width:57.3px;text-align:center;font-size:9.2px;line-height:11.0px;color:#e0c498;font-weight:bold;transform:rotate(15deg) scale(0.25)">10kV专变</span>
<span class="t" style="left:-6.7px;top:53.4px;width:57.3px;text-align:center;font-size:9.2px;line-height:11.0px;color:#7890a4;font-weight:bold;transform:rotate(15deg) scale(0.25)">10kV专变</span>
<span class="t" style="left:123.0px;top:108.2px;width:53.4px;text-align:center;font-size:9.2px;line-height:11.0px;color:#80a0cc;font-weight:bold;transform:rotate(-57deg) scale(0.25)">0421051</span>
<span class="t" style="left:30.3px;top:64.8px;width:75.7px;text-align:center;font-size:9.2px;line-height:11.0px;color:#a8bccc;font-weight:bold;transform:rotate(15deg) scale(0.25)">10kV长安专变</span>
<span class="t" style="left:-24.6px;top:13.2px;width:75.7px;text-align:center;font-size:9.2px;line-height:11.0px;color:#989cd4;font-weight:bold;transform:rotate(15deg) scale(0.25)">10kV东风公变</span>
<span class="t" style="left:161.8px;top:85.0px;width:57.3px;text-align:center;font-size:9.2px;line-height:11.0px;color:#8880a4;font-weight:bold;transform:rotate(-57deg) scale(0.25)">10kV公变</span>
<span class="t" style="left:114.9px;top:104.8px;width:53.4px;text-align:center;font-size:9.2px;line-height:11.0px;color:#7890a4;font-weight:bold;transform:rotate(-57deg) scale(0.25)">0421051</span>
<span class="t" style="left:51.4px;top:20.4px;width:53.4px;text-align:center;font-size:9.2px;line-height:11.0px;color:#c4a8ea;font-weight:bold;transform:rotate(-57deg) scale(0.25)">0406089</span>
<span class="t" style="left:44.6px;top:52.2px;width:57.3px;text-align:center;font-size:9.2px;line-height:11.0px;color:#c0f070;font-weight:bold;transform:rotate(-57deg) scale(0.25)">10kV专变</span>
<span class="t" style="left:-1.6px;top:71.2px;width:57.3px;text-align:center;font-size:9.2px;line-height:11.0px;color:#98d070;font-weight:bold;transform:rotate(15deg) scale(0.25)">10kV专变</span>
<span class="t" style="left:-10.7px;top:59.7px;width:75.7px;text-align:center;font-size:9.2px;line-height:11.0px;color:#d8ec60;font-weight:bold;transform:rotate(15deg) scale(0.25)">10kV东风公变</span>
<span class="t" style="left:91.9px;top:4.4px;width:53.4px;text-align:center;font-size:9.2px;line-height:11.0px;color:#a8bccc;font-weight:bold;transform:rotate(15deg) scale(0.25)">0421051</span>
<span class="t" style="left:46.7px;top:81.3px;width:53.4px;text-align:center;font-size:9.2px;line-height:11.0px;color:#c4a8ea;font-weight:bold;transform:rotate(15deg) scale(0.25)">0421051</span>
<span class="t" style="left:166.2px;top:18.8px;width:53.4px;text-align:center;font-size:9.2px;line-height:11.0px;color:#948460;font-weight:bold;transform:rotate(-57deg) scale(0.25)">0421051</span>
<span class="t" style="left:74.4px;top:44.6px;width:57.3px;text-align:center;font-size:9.2px;line-height:11.0px;color:#e0c498;font-weight:bold;transform:rotate(-57deg) scale(0.25)">10kV公变</span>
<span class="t" style="left:20.7px;top:22.6px;width:53.4px;text-align:center;font-size:9.2px;line-height:11.0px;color:#98d070;font-weight:bold;transform:rotate(15deg) scale(0.25)">0421051</span>
<span class="t" style="left:165.0px;top:114.2px;width:53.4px;text-align:center;font-size:9.2px;line-height:11.0px;color:#f4ec78;font-weight:bold;transform:rotate(-57deg) scale(0.25)">0406089</span>
<span class="t" style="left:67.9px;top:63.2px;width:57.3px;text-align:center;font-size:9.2px;line-height:11.0px;color:#f6c480;font-weight:bold;transform:rotate(15deg) scale(0.25)">10kV公变</span>
<span class="t" style="left:76.8px;top:14.4px;width:53.4px;text-align:center;font-size:9.2px;line-height:11.0px;color:#9cacea;font-weight:bold;transform:rotate(-57deg) scale(0.25)">0406089</span>
<span class="t" style="left:133.0px;top:138.9px;width:57.3px;text-align:center;font-size:9.2px;line-height:11.0px;color:#7484b8;font-weight:bold;transform:rotate(15deg) scale(0.25)">10kV专变</span>
<span class="t" style="left:120.2px;top:-0.3px;width:57.3px;text-align:center;font-size:9.2px;line-height:11.0px;color:#e0c498;font-weight:bold;transform:rotate(15deg) scale(0.25)">10kV公变</span>
<span class="t" style="left:161.0px;top:147.3px;width:57.3px;text-align:center;font-size:9.2px;line-height:11.0px;color:#7484b8;font-weight:bold;transform:rotate(15deg) scale(0.25)">10kV专变</span>
</div>
</body></html>
